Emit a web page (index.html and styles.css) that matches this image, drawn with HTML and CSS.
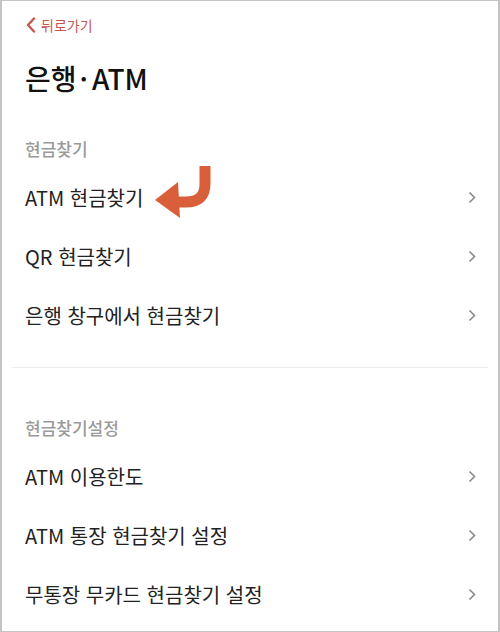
FILE: index.html
```html
<!DOCTYPE html>
<html lang="ko">
<head>
<meta charset="utf-8">
<link rel="stylesheet" href="styles.css">
</head>
<body>
<div class="frame">
  <a class="back">
    <svg class="back-icon" width="10" height="16" viewBox="0 0 10 16"><path d="M8 1.5 L2 8 L8 14.5" fill="none" stroke="#c4574f" stroke-width="2.4" stroke-linecap="round" stroke-linejoin="round"/></svg>
    <span>뒤로가기</span>
  </a>
  <h1 class="title">은행<span class="dot">·</span>ATM</h1>

  <section class="group">
    <div class="group-label">현금찾기</div>
    <div class="row"><span>ATM 현금찾기</span><svg class="chev" width="8" height="13" viewBox="0 0 8 13"><path d="M1.5 1.5 L6.5 6.5 L1.5 11.5" fill="none" stroke="#8a8a8a" stroke-width="1.6"/></svg></div>
    <div class="row"><span>QR 현금찾기</span><svg class="chev" width="8" height="13" viewBox="0 0 8 13"><path d="M1.5 1.5 L6.5 6.5 L1.5 11.5" fill="none" stroke="#8a8a8a" stroke-width="1.6"/></svg></div>
    <div class="row"><span>은행 창구에서 현금찾기</span><svg class="chev" width="8" height="13" viewBox="0 0 8 13"><path d="M1.5 1.5 L6.5 6.5 L1.5 11.5" fill="none" stroke="#8a8a8a" stroke-width="1.6"/></svg></div>
  </section>

  <hr class="divider">

  <section class="group second">
    <div class="group-label">현금찾기설정</div>
    <div class="row"><span>ATM 이용한도</span><svg class="chev" width="8" height="13" viewBox="0 0 8 13"><path d="M1.5 1.5 L6.5 6.5 L1.5 11.5" fill="none" stroke="#8a8a8a" stroke-width="1.6"/></svg></div>
    <div class="row"><span>ATM 통장 현금찾기 설정</span><svg class="chev" width="8" height="13" viewBox="0 0 8 13"><path d="M1.5 1.5 L6.5 6.5 L1.5 11.5" fill="none" stroke="#8a8a8a" stroke-width="1.6"/></svg></div>
    <div class="row"><span>무통장 무카드 현금찾기 설정</span><svg class="chev" width="8" height="13" viewBox="0 0 8 13"><path d="M1.5 1.5 L6.5 6.5 L1.5 11.5" fill="none" stroke="#8a8a8a" stroke-width="1.6"/></svg></div>
  </section>

  <svg class="pointer" width="64" height="60" viewBox="0 0 64 60">
    <path d="M53 4 L53 22 Q53 40 34 40 L22 40" fill="none" stroke="#d95f3a" stroke-width="11"/>
    <polygon points="3,38 26,20 28,56" fill="#d95f3a"/>
  </svg>
</div>
</body>
</html>
```

FILE: styles.css
```css
* { box-sizing: border-box; }
html, body { margin: 0; padding: 0; background: #fff; }
body {
  font-family: "Noto Sans CJK KR", "Noto Sans", sans-serif;
  color: #222;
}
.frame {
  position: relative;
  width: 500px;
  height: 632px;
  border: 1px solid #c4c4c4;
  border-left-width: 2px;
  border-right-width: 2px;
  display: flex;
  flex-direction: column;
  overflow: hidden;
}
.frame > * { flex-shrink: 0; }
.back {
  height: 47px;
  display: flex;
  align-items: center;
  gap: 5px;
  padding-left: 24px;
  color: #c4574f;
  font-size: 14px;
  padding-top: 0;
}
.back-icon { display: block; }
.title {
  margin: 0;
  height: 60px;
  display: flex;
  align-items: center;
  padding-left: 23px;
  font-size: 28px;
  font-weight: 500;
  color: #111;
}
.dot { margin: 0 4px 0 3px; }
.group {
  display: flex;
  flex-direction: column;
  padding-top: 20px;
  padding-bottom: 22px;
}
.group > * { flex-shrink: 0; }
.group.second { padding-top: 39px; padding-bottom: 0; }
.group-label {
  height: 40px;
  display: flex;
  align-items: center;
  padding-left: 23px;
  font-size: 17px;
  color: #9a9a9a;
  font-weight: 500;
}
.row {
  height: 59px;
  display: flex;
  align-items: center;
  justify-content: space-between;
  padding-left: 23px;
  padding-right: 22px;
  font-size: 20px;
  color: #222;
}
.chev { display: block; }
.divider {
  margin: 0 10px;
  border: 0;
  border-top: 1px solid #ececec;
  height: 0;
}
.pointer {
  position: absolute;
  left: 150px;
  top: 161px;
}
```
